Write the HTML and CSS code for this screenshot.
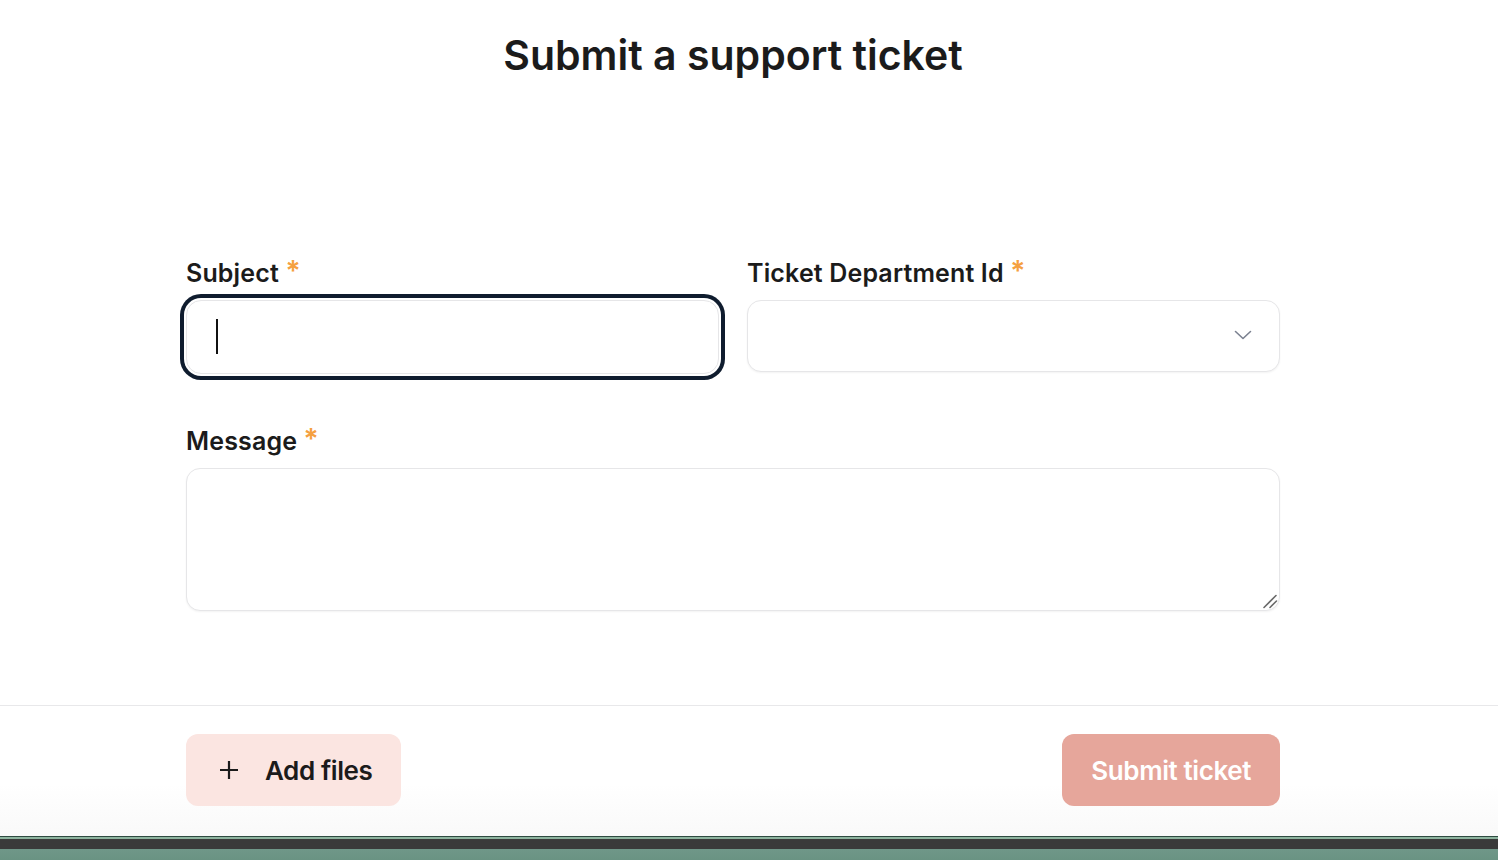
FILE: index.html
```html
<!DOCTYPE html>
<html lang="en">
<head>
<meta charset="utf-8">
<title>Submit a support ticket</title>
<link rel="stylesheet" href="styles.css">
</head>
<body>
<div class="page">
  <main class="main">
    <h1 class="title">Submit a support ticket</h1>
    <form class="form">
      <div class="row two">
        <div class="field">
          <label class="label" for="subject">Subject <span class="req">*</span></label>
          <div class="input-wrap">
            <input id="subject" class="input focused" type="text">
            <span class="caret"></span>
          </div>
        </div>
        <div class="field">
          <label class="label" for="dept">Ticket Department Id <span class="req">*</span></label>
          <div class="input-wrap">
            <select id="dept" class="input select"><option></option></select>
            <svg class="chevron" width="18" height="10" viewBox="0 0 18 10" fill="none"><path d="M1.5 1.5 L9 8.5 L16.5 1.5" stroke="#7b8190" stroke-width="1.6" stroke-linecap="round" stroke-linejoin="round"/></svg>
          </div>
        </div>
      </div>
      <div class="row">
        <div class="field">
          <label class="label" for="msg">Message <span class="req">*</span></label>
          <div class="input-wrap">
            <textarea id="msg" class="input textarea"></textarea>
            <svg class="grip" width="16" height="16" viewBox="0 0 16 16" fill="none"><path d="M2 14.5 L14 2.5 M8 14.5 L14.5 8" stroke="#6a6a6a" stroke-width="1.6" stroke-linecap="round"/></svg>
          </div>
        </div>
      </div>
    </form>
  </main>
  <footer class="footer">
    <div class="footer-inner">
      <button type="button" class="btn btn-add">
        <svg width="20" height="20" viewBox="0 0 20 20" fill="none"><path d="M10 1 V19 M1 10 H19" stroke="#1b1b1b" stroke-width="2.2"/></svg>
        <span>Add files</span>
      </button>
      <button type="button" class="btn btn-submit">Submit ticket</button>
    </div>
  </footer>
  <div class="desktop"></div>
</div>
</body>
</html>
```

FILE: styles.css
```css
* { box-sizing: border-box; }
html, body { margin: 0; padding: 0; }
body {
  font-family: Inter, "Liberation Sans", sans-serif;
  color: #1b1b1b;
  background: #ffffff;
  height: 860px;
  overflow: hidden;
}
.page {
  height: 860px;
  display: flex;
  flex-direction: column;
}
.main {
  flex: 1;
  width: 1094px;
  margin-left: 186px;
}
.title {
  margin: 31px 0 0;
  font-size: 41px;
  line-height: 48px;
  font-weight: 600;
  letter-spacing: 0;
  text-align: center;
  color: #1b1b1b;
}
.form {
  padding-top: 178px;
  display: flex;
  flex-direction: column;
  gap: 53px;
}
.row.two {
  display: grid;
  grid-template-columns: 1fr 1fr;
  column-gap: 28px;
}
.field { display: flex; flex-direction: column; }
.label {
  font-size: 25px;
  line-height: 32px;
  font-weight: 600;
  letter-spacing: 0.15px;
  color: #1b1b1b;
  margin-bottom: 11px;
}
.req {
  color: #f5a040;
  font-size: 28px;
  line-height: 28px;
  vertical-align: top;
  margin-left: 0;
}
.input-wrap { position: relative; }
.input {
  display: block;
  width: 100%;
  height: 72px;
  border: 1px solid #e6e6e8;
  border-radius: 14px;
  background: #fff;
  box-shadow: 0 1px 2px rgba(0, 0, 0, 0.05);
  font-family: inherit;
  font-size: 20px;
  padding: 0 30px;
  outline: none;
  caret-color: transparent;
}
.input.focused {
  height: 74px;
  margin-bottom: -2px;
  border-radius: 15px;
  box-shadow: 0 0 0 2px #fff, 0 0 0 6px #0f1c2e;
}
.caret {
  position: absolute;
  left: 30px;
  top: 19px;
  width: 2px;
  height: 35px;
  background: #111;
}
.select {
  appearance: none;
  -webkit-appearance: none;
  color: #1b1b1b;
}
.chevron {
  position: absolute;
  right: 28px;
  top: 30px;
  pointer-events: none;
}
.textarea {
  height: 143px;
  resize: none;
  padding: 16px 30px;
}
.grip {
  position: absolute;
  right: 2px;
  bottom: 2px;
  pointer-events: none;
}
.footer {
  border-top: 1px solid #e8e8ea;
  background: linear-gradient(#ffffff 0%, #ffffff 60%, #f9f9f9 100%);
  height: 131px;
}
.footer-inner {
  width: 1094px;
  margin-left: 186px;
  padding-top: 28px;
  display: flex;
  justify-content: space-between;
}
.btn {
  height: 72px;
  border: none;
  border-radius: 12px;
  font-family: inherit;
  font-size: 26px;
  font-weight: 600;
  letter-spacing: -0.4px;
  display: flex;
  align-items: center;
  cursor: pointer;
}
.btn-add {
  background: #fbe5e1;
  color: #1b1b1b;
  padding: 0 29px 0 33px;
  gap: 26px;
}
.btn-submit {
  background: #e6a69b;
  color: #ffffff;
  padding: 0 29px;
}
.desktop {
  height: 24px;
  flex: none;
  background: linear-gradient(#2d4a40 0px, #2d4a40 1px, #8db39e 1px, #8db39e 3px, #3a3a3a 3px, #3a3a3a 13px, #6f9788 13px, #6a9383 24px);
}
```
